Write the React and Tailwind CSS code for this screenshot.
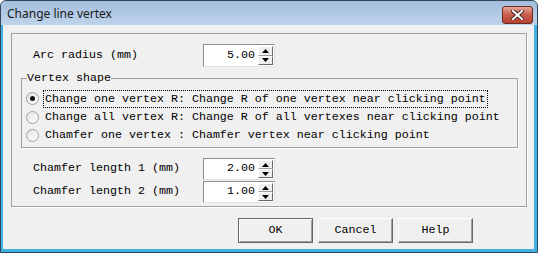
import React from 'react';

const mono = "font-['Liberation_Mono','Courier_New',monospace] text-[11.67px] text-black";

function Arrow({ up }) {
  return (
    <svg width="7" height="4" viewBox="0 0 7 4" className="block">
      {up ? <path d="M0 4 L3.5 0 L7 4 Z" fill="#000" /> : <path d="M0 0 L3.5 4 L7 0 Z" fill="#000" />}
    </svg>
  );
}

function Spin({ value, h }) {
  return (
    <div className={`flex ${h} w-[72px] border border-t-[#8f8f8f] border-l-[#8f8f8f] border-b-[#e3e3e3] border-r-[#e3e3e3] bg-white`}>
      <div className={`flex-1 flex items-center justify-end pr-[3px] ${mono}`}>{value}</div>
      <div className="flex flex-col w-[15px] my-[1px] mr-[1px]">
        <div className="flex-1 flex items-center justify-center bg-[#f0f0f0] border border-t-white border-l-white border-r-[#696969] border-b-[#a0a0a0]">
          <Arrow up />
        </div>
        <div className="flex-1 flex items-center justify-center bg-[#f0f0f0] border border-t-white border-l-white border-r-[#696969] border-b-[#696969]">
          <Arrow />
        </div>
      </div>
    </div>
  );
}

function Radio({ checked, label, focused, first }) {
  return (
    <div className={`flex items-center ${first ? 'h-[19px]' : 'h-[18px]'}`}>
      <div className="ml-[4px] w-[13px] h-[13px] rounded-full border border-[#a0a0a0] bg-linear-to-br from-[#e2e2e2] to-white flex items-center justify-center">
        {checked && <div className="w-[5px] h-[5px] rounded-full bg-[#111]" />}
      </div>
      <span className={`ml-[5px] px-[1px] whitespace-pre leading-[16px] ${mono} ${focused ? 'outline outline-1 outline-dotted outline-black' : ''}`}>
        {label}
      </span>
    </div>
  );
}

function Button({ label, isDefault }) {
  return (
    <button
      className={`w-[75px] h-[25px] bg-[#f0f0f0] ${mono} ${
        isDefault
          ? 'border border-[#646464] shadow-[inset_1px_1px_0_#fff,inset_-1px_-1px_0_#a0a0a0]'
          : 'border border-t-white border-l-white border-r-[#696969] border-b-[#696969] shadow-[inset_-1px_-1px_0_#a0a0a0]'
      }`}
    >
      {label}
    </button>
  );
}

export default function App() {
  return (
    <div className="w-[538px] h-[253px] flex flex-col border border-[#34465a] rounded-t-[6px] overflow-hidden bg-[#3fb2e2]">
      <div className="h-[24px] shrink-0 flex items-center justify-between bg-linear-to-b from-[#a3bddb] to-[#bed4ec] pl-[6px] pr-[4px]">
        <span className="font-['Noto_Sans',sans-serif] text-[12px] text-[#1a1a1a] pt-[1px]">Change line vertex</span>
        <div className="w-[31px] h-[18px] mt-[4px] rounded-[3px] border border-[#6b2a22] bg-linear-to-b from-[#e3a596] via-[#c85c4c] to-[#b8402f] flex items-center justify-center">
          <svg width="13" height="10" viewBox="0 0 13 10">
            <path d="M2 1 L11 9 M11 1 L2 9" stroke="#4a2a26" strokeWidth="4" strokeLinecap="square" />
            <path d="M2 1 L11 9 M11 1 L2 9" stroke="#fff" strokeWidth="2" strokeLinecap="square" />
          </svg>
        </div>
      </div>
      <div className="flex-1 pl-[2px] pr-[3px] pb-[3px] flex">
        <div className="flex-1 bg-[#f0f0f0] pt-[8px] pl-[8px] flex flex-col">
          <div className="w-[516px] h-[174px] border border-[#a0a0a0] shadow-[1px_1px_0_#fff] flex flex-col">
            <div className="flex items-center mt-[10px] ml-[21px]">
              <span className={`w-[170px] ${mono}`}>Arc radius (mm)</span>
              <Spin value="5.00" h="h-[23px]" />
            </div>
            <fieldset className="ml-[9px] mt-[4px] w-[497px] h-[77px] border border-[#a0a0a0] shadow-[1px_1px_0_#fff] min-w-0 px-0 pb-0">
              <legend className={`ml-[5px] px-0 leading-[14px] ${mono}`}>Vertex shape</legend>
              <div className="mt-[4px] flex flex-col">
                <Radio first checked focused label="Change one vertex R: Change R of one vertex near clicking point" />
                <Radio label="Change all vertex R: Change R of all vertexes near clicking point" />
                <Radio label="Chamfer one vertex : Chamfer vertex near clicking point" />
              </div>
            </fieldset>
            <div className="flex items-center mt-[10px] ml-[21px]">
              <span className={`w-[170px] ${mono}`}>Chamfer length 1 (mm)</span>
              <Spin value="2.00" h="h-[22px]" />
            </div>
            <div className="flex items-center mt-[1px] ml-[21px]">
              <span className={`w-[170px] ${mono}`}>Chamfer length 2 (mm)</span>
              <Spin value="1.00" h="h-[22px]" />
            </div>
          </div>
          <div className="flex justify-end gap-[5px] pr-[61px] mt-[11px]">
            <Button label="OK" isDefault />
            <Button label="Cancel" />
            <Button label="Help" />
          </div>
        </div>
      </div>
    </div>
  );
}
